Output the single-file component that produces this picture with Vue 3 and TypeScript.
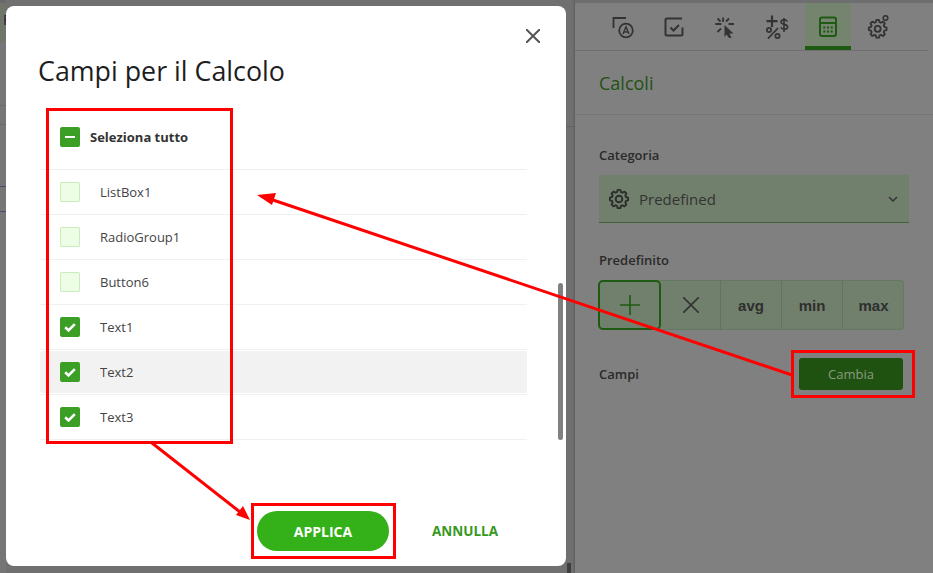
<script setup lang="ts">
interface Field { name: string; checked: boolean; hover?: boolean }

const fields: Field[] = [
  { name: 'ListBox1', checked: false },
  { name: 'RadioGroup1', checked: false },
  { name: 'Button6', checked: false },
  { name: 'Text1', checked: true },
  { name: 'Text2', checked: true, hover: true },
  { name: 'Text3', checked: true },
]
const ops = ['avg', 'min', 'max']

// outline of a cog: each tooth is a trapezoid between the two radii
function gear(cx: number, cy: number, outer: number, inner: number, teeth = 8): string {
  const step = (Math.PI * 2) / teeth
  const pts: string[] = []
  for (let i = 0; i < teeth; i++) {
    const a = i * step - Math.PI / 2
    const at = (r: number, t: number) => `${(cx + r * Math.cos(a + t * step)).toFixed(2)} ${(cy + r * Math.sin(a + t * step)).toFixed(2)}`
    pts.push(at(inner, -0.36), at(outer, -0.18), at(outer, 0.18), at(inner, 0.36))
  }
  return `M${pts.join('L')}Z`
}
const tabGear = gear(10.7, 13.8, 9, 6.9)
const selectGear = gear(12, 12, 9.2, 7.2)
</script>

<template>
  <div class="page">
    <div class="behind">
      <div class="behind-head"><span>F</span></div>
      <i class="stub" style="top: 102px" />
      <i class="stub" style="top: 121px" />
      <i class="stub purple" style="top: 183px" />
      <i class="stub purple" style="top: 208px" />
    </div>
    <i class="gutter-line" />
    <i class="gutter-foot" />

    <aside class="panel">
      <nav class="tabs">
        <span class="tab">
          <svg viewBox="0 0 24 24" width="24" height="24" fill="none" stroke="#333" stroke-width="1.8">
            <path d="M2.500 13V3h12.500" />
            <circle cx="15" cy="15.500" r="6.800" />
            <path d="M12 19l3-7.200 3 7.200M13 17h4" stroke-width="1.400" />
          </svg>
        </span>
        <span class="tab">
          <svg viewBox="0 0 24 24" width="24" height="24" fill="none" stroke="#333" stroke-width="2">
            <path d="M20.500 12.500V19a1.500 1.500 0 0 1-1.500 1.500H5A1.500 1.500 0 0 1 3.500 19V5A1.500 1.500 0 0 1 5 3.500h15" />
            <path d="M8.500 12.500l3 3 5.500-5.500" />
          </svg>
        </span>
        <span class="tab">
          <svg viewBox="0 0 24 24" width="24" height="24" fill="none" stroke="#333" stroke-width="1.800">
            <path d="M10.100 2.500V7M2.300 9h6M4.500 3.500l3 3M16 3.500l-3 3M21 9h-5.500M4.500 17L8 13.500" />
            <path d="M11.500 10l9 8.500h-4l2 4.500H16l-2.500-3.500-2 2.500z" fill="#333" stroke="none" />
          </svg>
        </span>
        <span class="tab">
          <svg viewBox="0 0 24 24" width="24" height="24" fill="none" stroke="#333" stroke-width="1.800">
            <path d="M7 .5v11.500M1.500 6.200h11" stroke-width="2.200" />
            <path d="M13 13L3 23.500" />
            <circle cx="4" cy="15" r="2.100" />
            <circle cx="12.500" cy="21" r="2.100" />
            <path d="M22.300 6.500c-.4-1-1.500-1.600-3.200-1.600-1.800 0-3.100.9-3.100 2.200 0 3 6.600 1.500 6.600 4.800 0 1.300-1.400 2.300-3.400 2.300-1.700 0-2.900-.7-3.300-1.900M19 3v14" stroke-width="1.600" />
          </svg>
        </span>
        <span class="tab active">
          <svg viewBox="0 0 24 24" width="24" height="24" fill="none" stroke="#1f5a12" stroke-width="2">
            <rect x="4" y="2.500" width="16" height="18.500" rx="2" />
            <path d="M4 8h16" />
            <path d="M7.300 12.500h2M11 12.500h2M14.700 12.500h2M7.300 16.500h2M11 16.500h2M14.700 16.500h2" />
          </svg>
        </span>
        <span class="tab">
          <svg viewBox="0 0 24 24" width="24" height="24" fill="none" stroke="#333" stroke-width="1.800" stroke-linejoin="round">
            <path :d="tabGear" />
            <circle cx="10.700" cy="13.800" r="3" />
            <circle cx="18.500" cy="3" r="2.300" stroke-width="1.600" />
          </svg>
        </span>
      </nav>

      <h2 class="panel-title">Calcoli</h2>

      <div class="panel-body">
        <label class="lbl">Categoria</label>
        <div class="select">
          <svg viewBox="0 0 24 24" width="24" height="24" fill="none" stroke="#2e2e2e" stroke-width="1.900" stroke-linejoin="round">
            <path :d="selectGear" />
            <circle cx="12" cy="12" r="3.300" />
          </svg>
          <span class="select-text">Predefined</span>
          <svg viewBox="0 0 10 6" width="10" height="6" fill="none" stroke="#333" stroke-width="1.500"><path d="M1 1l4 4 4-4" /></svg>
        </div>

        <label class="lbl lbl-pre">Predefinito</label>
        <div class="ops">
          <span class="op op-plus">
            <svg viewBox="0 0 20 20" width="20" height="20" stroke="#1f5a12" stroke-width="1.600"><path d="M10 0v20M0 10h20" /></svg>
          </span>
          <span class="op op-x">
            <svg viewBox="0 0 16 16" width="16" height="16" stroke="#333" stroke-width="1.600"><path d="M0 0l16 16M16 0L0 16" /></svg>
          </span>
          <span v-for="o in ops" :key="o" class="op">{{ o }}</span>
        </div>

        <div class="campi">
          <span class="campi-lbl">Campi</span>
          <span class="cambia">Cambia</span>
        </div>
      </div>
    </aside>

    <section class="modal">
      <svg class="close" viewBox="0 0 14 14" width="14" height="14" stroke="#555" stroke-width="2"><path d="M0 0l14 14M14 0L0 14" /></svg>
      <h1 class="modal-title">Campi per il Calcolo</h1>

      <div class="list">
        <div class="row head">
          <span class="box on">
            <svg viewBox="0 0 20 20" width="20" height="20"><path d="M5 10h10" stroke="#fff" stroke-width="2" /></svg>
          </span>
          <span class="head-text">Seleziona tutto</span>
        </div>
        <div v-for="f in fields" :key="f.name" class="row" :class="{ hover: f.hover }">
          <span class="box" :class="{ on: f.checked }">
            <svg v-if="f.checked" viewBox="0 0 20 20" width="20" height="20" fill="none">
              <path d="M5.200 10.300l3.300 3.200 6.300-6.300" stroke="#fff" stroke-width="2.600" />
            </svg>
          </span>
          <span class="row-text">{{ f.name }}</span>
        </div>
      </div>
      <i class="scroll" />

      <div class="actions">
        <button class="apply">APPLICA</button>
        <button class="cancel">ANNULLA</button>
      </div>
    </section>

    <!-- red annotations drawn on top of the screenshot -->
    <svg class="notes" width="933" height="573" viewBox="0 0 933 573" fill="none">
      <g stroke="#f00" stroke-width="3">
        <rect x="47.500" y="109.500" width="184" height="333" />
        <rect x="792.500" y="351.500" width="121" height="45" />
        <rect x="252.500" y="504.500" width="142" height="53" />
        <path d="M792 375L270 199" />
        <path d="M152 443L240 512" />
      </g>
      <path d="M257 195L276 193L272 205Z" fill="#f00" />
      <path d="M250 520L236 515L243 506Z" fill="#f00" />
    </svg>
  </div>
</template>

<style>
body { background: #7f7f7f; }
</style>

<style scoped>
.page {
  position: relative;
  width: 933px;
  height: 573px;
  overflow: hidden;
  background: #707070;
  font-family: "Open Sans", sans-serif;
  display: flex;
  justify-content: flex-end;
}
.behind { position: absolute; left: 0; top: 0; width: 6px; height: 100%; background: #767676; border-top: 3px solid #696969; box-sizing: border-box; }
.behind-head { height: 39px; background: #6f7669; color: #2a1530; font-size: 14px; line-height: 34px; padding-left: 3px; }
.stub { position: absolute; left: 0; width: 6px; height: 1px; background: #6a6a6a; }
.stub.purple { background: #54456a; }
.gutter-line { position: absolute; left: 566px; top: 126px; width: 9px; height: 1px; background: #626262; }
.gutter-foot { position: absolute; left: 567px; top: 563px; width: 4px; height: 10px; background: #3e3e3e; }

.panel {
  width: 358px;
  height: 573px;
  background: #808080;
  box-sizing: border-box;
  border-top: 3px solid #6e6e6e;
  box-shadow: -1px 0 2px rgba(0, 0, 0, .2);
}
.tabs {
  height: 48px;
  box-sizing: border-box;
  margin-right: 5px;
  padding-left: 25px;
  display: flex;
  gap: 5.200px;
  border-bottom: 1px solid #6e6e6e;
}
.tab {
  position: relative;
  width: 46px;
  height: 47px;
  display: flex;
  align-items: center;
  justify-content: center;
}
.tab.active { background: #74846e; }
.tab.active::after {
  content: "";
  position: absolute;
  left: 0;
  right: 0;
  bottom: 0;
  height: 4px;
  background: #1f5a12;
}
.panel-title {
  margin: 0;
  height: 64px;
  box-sizing: border-box;
  padding-left: 24px;
  display: flex;
  align-items: center;
  font-size: 18px;
  font-weight: 400;
  color: #1f5214;
  border-bottom: 1px solid #757575;
}
.panel-body { padding: 31px 24px 0; }
.lbl {
  display: block;
  font-size: 13px;
  font-weight: 600;
  line-height: 18px;
  color: #2a2a2a;
}
.select {
  margin-top: 11px;
  width: 310px;
  height: 48px;
  padding: 0 11px 0 8px;
  box-sizing: border-box;
  display: flex;
  align-items: center;
  background: #71806c;
  border-bottom: 1px solid #46603c;
}
.select-text { margin-left: 8px; font-size: 15px; color: #333; flex: 1; }
.lbl-pre { margin-top: 28px; }
.ops {
  margin-top: 11px;
  width: 305px;
  height: 50px;
  display: flex;
  background: #71806c;
  border-radius: 4px;
  box-sizing: border-box;
  box-shadow: inset 0 0 0 1px #657860;
}
.op {
  width: 61px;
  display: flex;
  align-items: center;
  justify-content: center;
  font-family: "Liberation Sans", sans-serif;
  font-size: 15px;
  font-weight: 700;
  color: #2e2e2e;
  border-left: 1px solid #62745c;
  box-sizing: border-box;
}
.op:last-child { width: 62px; }
.op-plus { width: 63px; margin-left: -1px; border: 2px solid #1f5a12; border-radius: 5px; }
.op-x { width: 59px; border-left: 0; }
.campi {
  margin-top: 28px;
  display: flex;
  align-items: center;
  justify-content: space-between;
  height: 32px;
  padding-right: 6px;
}
.campi-lbl { font-size: 13px; font-weight: 600; color: #2a2a2a; }
.cambia {
  width: 104px;
  height: 32px;
  border-radius: 3px;
  background: #1f5210;
  color: #8a9a80;
  font-size: 13px;
  display: flex;
  align-items: center;
  justify-content: center;
}

.modal {
  position: absolute;
  left: 6px;
  top: 6px;
  width: 560px;
  height: 560px;
  background: #fff;
  border-radius: 8px;
  padding: 1px 39px 0 34px;
  box-sizing: border-box;
}
.close { position: absolute; right: 26px; top: 23px; }
.modal-title {
  margin: 44px 0 0 -2px;
  font-size: 26.800px;
  font-weight: 400;
  line-height: 40px;
  color: #1e1e1e;
}
.list { margin-top: 19px; width: 487px; }
.row {
  height: 45px;
  display: flex;
  align-items: center;
  padding-left: 20px;
  box-sizing: border-box;
  border-bottom: 1px solid #f0f0f0;
  position: relative;
}
.row.head { height: 60px; padding-bottom: 6px; }
.row.hover::before {
  content: "";
  position: absolute;
  inset: 1px 0 1px 0;
  background: #f2f2f2;
  border-radius: 3px;
}
.box {
  position: relative;
  width: 20px;
  height: 20px;
  border-radius: 2px;
  background: #edfde6;
  box-shadow: inset 0 0 0 1px #c9edbc;
  flex: none;
}
.box.on { background: #3a9f24; box-shadow: none; }
.box svg { display: block; }
.head-text { margin-left: 10px; font-size: 13px; font-weight: 700; color: #333; }
.row-text { position: relative; margin-left: 20px; font-size: 13px; color: #444; }
.scroll {
  position: absolute;
  left: 552px;
  top: 277px;
  width: 5px;
  height: 157px;
  border-radius: 3px;
  background: #808080;
}
.actions {
  position: absolute;
  left: 251px;
  top: 505px;
  display: flex;
  align-items: center;
}
.apply, .cancel {
  border: 0;
  padding: 0;
  font-family: inherit;
  font-weight: 700;
  cursor: pointer;
}
.apply { width: 132px; height: 40px; border-radius: 20px; background: #34b118; color: #fff; font-size: 14px; }
.cancel { width: 152px; height: 40px; background: transparent; color: #38981f; font-size: 13.500px; }
.notes { position: absolute; left: 0; top: 0; pointer-events: none; }
</style>
